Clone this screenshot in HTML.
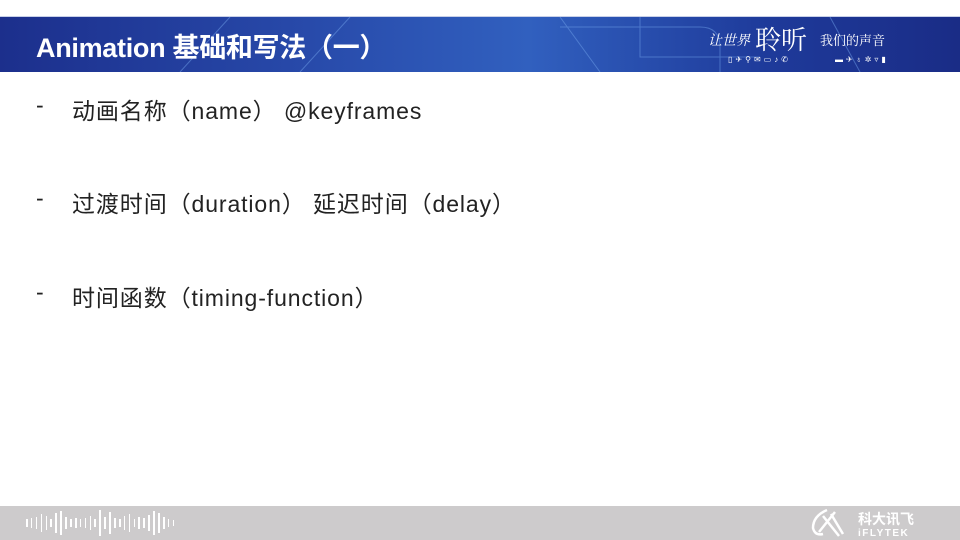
<!DOCTYPE html>
<html><head><meta charset="utf-8"><style>
body{margin:0;width:960px;height:540px;background:#fff;position:relative;overflow:hidden;font-family:"Liberation Sans","Noto Sans CJK SC",sans-serif}
.hd{position:absolute;left:0;top:16px;width:960px;height:55px;background:linear-gradient(90deg,#1c2f8c 0%,#2748a8 30%,#3160bf 55%,#1e3a9a 80%,#1a2c86 100%);border-top:1px solid #c8d0e8}
.title{position:absolute;left:36px;top:26px;color:#fff;font-size:27px;font-weight:bold;letter-spacing:-0.3px}
.item{position:absolute;left:36px;font-size:23px;color:#222}
.item span{position:absolute;left:36px;white-space:nowrap;letter-spacing:0.9px}
.ft{position:absolute;left:0;top:506px;width:960px;height:34px;background:#cdcbcc}
.bars{position:absolute;left:26px;top:0;height:34px;display:flex;align-items:center;gap:3.3px}
.bars i{display:block;width:1.6px;background:#fff}
</style></head><body>
<div class="hd">
<svg width="960" height="55" style="position:absolute;left:0;top:0">
<g stroke="#6fa0e8" stroke-width="1" fill="none" opacity="0.5">
<line x1="180" y1="55" x2="230" y2="0"/><line x1="300" y1="55" x2="350" y2="0"/>
<line x1="600" y1="55" x2="560" y2="0"/><line x1="860" y1="55" x2="830" y2="0"/>
<path d="M560 10 H700 Q720 10 720 30 V55"/><path d="M640 0 V40 H760"/>
</g>
<text x="708" y="28" fill="#fff" font-size="14" font-family="Noto Serif CJK SC,serif" font-style="italic">让世界</text>
<text x="755" y="32" fill="#fff" font-size="26" font-family="Noto Serif CJK SC,serif">聆听</text>
<text x="820" y="28" fill="#fff" font-size="13" font-family="Noto Serif CJK SC,serif">我们的声音</text>
<text x="728" y="45" fill="#fff" font-size="8" letter-spacing="3">▯✈⚲✉▭♪✆</text>
<text x="835" y="45" fill="#fff" font-size="8" letter-spacing="3">▬✈♁✲▿▮</text>
</svg>
</div>
<div class="title">Animation 基础和写法（一）</div>
<div class="item" style="top:92px">-<span>动画名称（name） @keyframes</span></div>
<div class="item" style="top:185px">-<span>过渡时间（duration） 延迟时间（delay）</span></div>
<div class="item" style="top:279px">-<span>时间函数（timing-function）</span></div>
<div class="ft">
<div class="bars">
<i style="height:8px"></i><i style="height:10px"></i><i style="height:12px"></i><i style="height:18px"></i><i style="height:14px"></i><i style="height:8px"></i><i style="height:20px"></i><i style="height:24px"></i><i style="height:12px"></i><i style="height:8px"></i><i style="height:10px"></i><i style="height:8px"></i><i style="height:10px"></i><i style="height:14px"></i><i style="height:8px"></i><i style="height:26px"></i><i style="height:12px"></i><i style="height:22px"></i><i style="height:10px"></i><i style="height:8px"></i><i style="height:14px"></i><i style="height:18px"></i><i style="height:8px"></i><i style="height:12px"></i><i style="height:10px"></i><i style="height:16px"></i><i style="height:24px"></i><i style="height:20px"></i><i style="height:12px"></i><i style="height:8px"></i><i style="height:6px"></i>
</div>
<svg width="140" height="34" style="position:absolute;left:805px;top:0">
<path d="M22 4 Q8 10 8 22 Q10 30 18 28 M14 26 L30 6 M18 10 L34 30 M26 8 L38 28" stroke="#fff" stroke-width="2.5" fill="none"/>
<text x="53" y="18" fill="#fff" font-size="14" font-weight="bold">科大讯飞</text>
<text x="53" y="30" fill="#fff" font-size="10" font-weight="bold" letter-spacing="1.5">iFLYTEK</text>
</svg>
</div>
</body></html>
